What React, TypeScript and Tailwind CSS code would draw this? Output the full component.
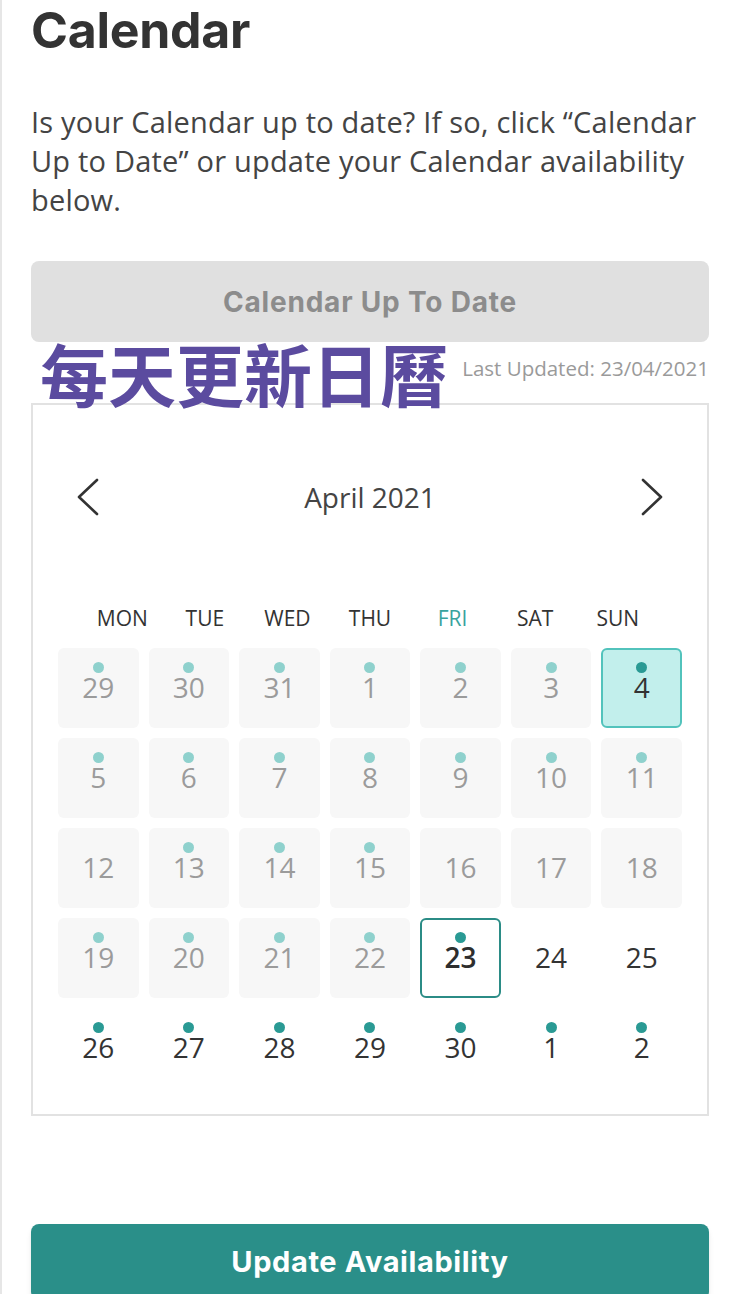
type Day = { n: number; kind: 'past' | 'selected' | 'today' | 'future'; dot: boolean };

const p = (n: number, dot = true): Day => ({ n, kind: 'past', dot });
const f = (n: number, dot = true): Day => ({ n, kind: 'future', dot });

const days: Day[] = [
  p(29), p(30), p(31), p(1), p(2), p(3), { n: 4, kind: 'selected', dot: true },
  p(5), p(6), p(7), p(8), p(9), p(10), p(11),
  p(12, false), p(13), p(14), p(15), p(16, false), p(17, false), p(18, false),
  p(19), p(20), p(21), p(22), { n: 23, kind: 'today', dot: true }, f(24, false), f(25, false),
  f(26), f(27), f(28), f(29), f(30), f(1), f(2),
];

const weekdays = ['MON', 'TUE', 'WED', 'THU', 'FRI', 'SAT', 'SUN'];

function Chevron({ dir }: { dir: 'left' | 'right' }) {
  return (
    <svg width="22" height="38" viewBox="0 0 22 38" fill="none" stroke="#333" strokeWidth="2.6" strokeLinecap="round" strokeLinejoin="round">
      {dir === 'left' ? <polyline points="20,2 2,19 20,36" /> : <polyline points="2,2 20,19 2,36" />}
    </svg>
  );
}

function DayCell({ day }: { day: Day }) {
  const box =
    day.kind === 'past'
      ? 'bg-[#f7f7f7] text-[#9b9b9b]'
      : day.kind === 'selected'
        ? 'bg-[#c2efec] border-2 border-[#52c3bc] text-[#333]'
        : day.kind === 'today'
          ? 'bg-white border-2 border-[#2b8c86] text-[#2e2e2e] font-semibold'
          : 'text-[#333]';
  const dot = day.kind === 'past' ? 'bg-[#8fd1cd]' : 'bg-[#2a9a94]';
  const pad = day.kind === 'selected' || day.kind === 'today' ? 'pt-[12px]' : 'pt-[14px]';
  return (
    <div className={`h-[80px] rounded-md flex flex-col items-center ${pad} ${box}`}>
      <div className={`w-[11px] h-[11px] rounded-full ${day.dot ? dot : 'bg-transparent'}`} />
      <span className="text-[28px] leading-none">{day.n}</span>
    </div>
  );
}

export default function App() {
  return (
    <div className="min-h-[1294px] bg-white border-l-2 border-[#e6e6e6] pl-[29px] pr-[31px] overflow-hidden font-['Open_Sans',sans-serif]">
      <h1 className="mt-[6px] text-[50px] leading-[48px] font-bold text-[#333] tracking-[-0.3px] font-['Inter',sans-serif]">
        Calendar
      </h1>

      <p className="mt-[48px] text-[29px] leading-[39px] tracking-[0.2px] text-[#444]">
        Is your Calendar up to date? If so, click “Calendar Up to Date” or update your Calendar availability below.
      </p>

      <button className="mt-[42px] w-full h-[81px] rounded-lg bg-[#e0e0e0] text-[#8c8c8c] text-[28px] tracking-[0.8px] font-bold font-['Inter',sans-serif]">
        Calendar Up To Date
      </button>

      <div className="relative h-[61px] flex justify-end items-start pt-[16px]">
        <span className="absolute left-[9px] -top-[3px] text-[68px] leading-none font-bold text-[#5b4b9f] font-['Noto_Sans_CJK_TC',sans-serif] z-10">
          每天更新日曆
        </span>
        <span className="text-[20.5px] leading-[20px] text-[#9a9a9a]">Last Updated: 23/04/2021</span>
      </div>

      <div className="border-2 border-[#e2e2e2] px-[25px] pt-[62px] pb-[26px]">
        <div className="h-[60px] flex items-center justify-between px-[19px]">
          <Chevron dir="left" />
          <span className="text-[28px] text-[#444]">April 2021</span>
          <Chevron dir="right" />
        </div>

        <div className="mt-[76px] mx-[23px] grid grid-cols-7 text-center">
          {weekdays.map(w => (
            <span key={w} className={`text-[21px] leading-[30px] ${w === 'FRI' ? 'text-[#3aa39e]' : 'text-[#333]'}`}>
              {w}
            </span>
          ))}
        </div>

        <div className="mt-[15px] grid grid-cols-7 gap-x-[10px] gap-y-[10px]">
          {days.map((d, i) => (
            <DayCell key={i} day={d} />
          ))}
        </div>
      </div>

      <button className="mt-[108px] w-full h-[76px] rounded-lg bg-[#2a8f89] text-white text-[29px] tracking-[0.6px] font-bold font-['Inter',sans-serif] shadow-md">
        Update Availability
      </button>
    </div>
  );
}
